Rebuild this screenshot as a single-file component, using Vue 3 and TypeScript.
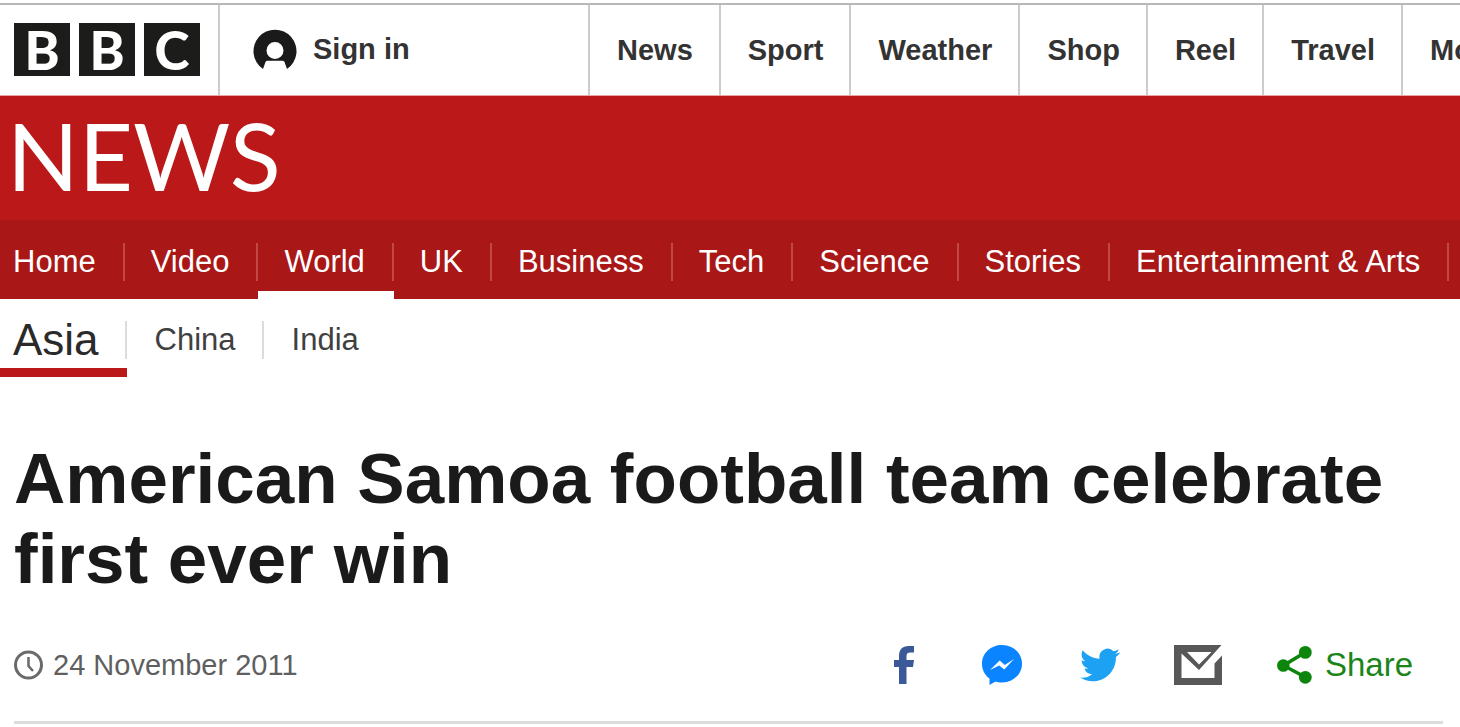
<script setup lang="ts">
interface NavItem {
  label: string
  current?: boolean
}

const logoLetters: string[] = ['B', 'B', 'C']
const siteLinks: string[] = ['News', 'Sport', 'Weather', 'Shop', 'Reel', 'Travel', 'More']
const sections: NavItem[] = [
  { label: 'Home' },
  { label: 'Video' },
  { label: 'World', current: true },
  { label: 'UK' },
  { label: 'Business' },
  { label: 'Tech' },
  { label: 'Science' },
  { label: 'Stories' },
  { label: 'Entertainment & Arts' },
]
const regions: NavItem[] = [{ label: 'Asia', current: true }, { label: 'China' }, { label: 'India' }]
</script>

<template>
  <div class="page">
    <header>
      <div class="top-bar">
        <a class="logo" href="#" aria-label="BBC">
          <span v-for="(letter, i) in logoLetters" :key="i" class="logo-block">{{ letter }}</span>
        </a>
        <a class="account" href="#">
          <svg width="44" height="40" viewBox="0 0 44 40" aria-hidden="true">
            <path
              fill="#1a1a1a"
              fill-rule="evenodd"
              d="M10 40A21.5 21.5 0 1 1 34 40L31.500 33Q31 31.800 29.500 31.800H14.500Q13 31.800 12.500 33ZM22 13a8.500 8.500 0 1 0 0 17a8.500 8.500 0 1 0 0-17Z"
            />
          </svg>
          <span>Sign in</span>
        </a>
        <nav class="site-nav" aria-label="BBC">
          <a v-for="link in siteLinks" :key="link" href="#">{{ link }}</a>
        </nav>
      </div>
      <div class="masthead">
        <a class="brand" href="#">NEWS</a>
      </div>
      <nav class="sections" aria-label="News sections">
        <a v-for="s in sections" :key="s.label" href="#" :class="{ current: s.current }">
          <span>{{ s.label }}</span>
        </a>
      </nav>
      <nav class="regions" aria-label="World regions">
        <a v-for="r in regions" :key="r.label" href="#" :class="{ current: r.current }">
          <span>{{ r.label }}</span>
        </a>
      </nav>
    </header>

    <main class="story">
      <h1>American Samoa football team celebrate first ever win</h1>
      <div class="meta">
        <div class="date">
          <svg width="29" height="30" viewBox="0 0 29 30" fill="none" stroke="#6a6a6a" aria-hidden="true">
            <circle cx="14.500" cy="15" r="13" stroke-width="3" />
            <path d="M14.500 7V16L19 21" stroke-width="2.500" />
          </svg>
          <time datetime="2011-11-24">24 November 2011</time>
        </div>
        <div class="share">
          <button type="button" class="icon-button" aria-label="Share on Facebook">
            <svg width="20" height="38" viewBox="0 0 20 38">
              <path
                fill="#3b5998"
                d="M5 38V21H0V14H5V10C5 3.500 8.500 0 14.500 0H20V6.500H16.500C13.500 6.500 12.500 7.500 12.500 10V14H20L19 21H12.500V38Z"
              />
            </svg>
          </button>
          <button type="button" class="icon-button" aria-label="Share on Messenger">
            <svg width="40" height="40" viewBox="0 0 40 40">
              <path
                fill="#0a84ff"
                d="M20 0C31 0 40 8 40 18.700S31 37.500 20 37.500C17.500 37.500 15.500 37.200 13.500 36.500L7.500 40V33.500C2.500 30 0 24.500 0 18.700C0 8 9 0 20 0Z"
              />
              <path fill="#fff" d="M8 25L17.700 15.500L22.800 20L32 14L22.300 24.500L17.200 20.500Z" />
            </svg>
          </button>
          <button type="button" class="icon-button" aria-label="Share on Twitter">
            <svg width="40" height="34" viewBox="0 2 24 20">
              <path
                fill="#1da1f2"
                d="M23.950 4.570a10 10 0 0 1-2.820.77 4.960 4.960 0 0 0 2.160-2.720c-.95.550-2 .95-3.120 1.180a4.920 4.920 0 0 0-8.380 4.480C7.690 8.090 4.070 6.130 1.640 3.160a4.820 4.820 0 0 0-.67 2.480c0 1.710.87 3.210 2.190 4.100a4.900 4.900 0 0 1-2.230-.62v.06a4.920 4.920 0 0 0 3.950 4.830 5 5 0 0 1-2.210.08 4.940 4.940 0 0 0 4.600 3.420A9.870 9.870 0 0 1 0 19.540a14 14 0 0 0 7.560 2.210c9.050 0 14-7.500 14-13.980 0-.21 0-.42-.02-.63a9.940 9.940 0 0 0 2.460-2.550Z"
              />
            </svg>
          </button>
          <button type="button" class="icon-button" aria-label="Share by email">
            <svg width="48" height="40" viewBox="0 0 48 40">
              <path
                fill="#585858"
                fill-rule="evenodd"
                d="M0 0H47.500L25 25L7.500 8.500V33H40.500V18.500L48 10.500V40H0ZM13 7H37.500L25 19.500Z"
              />
            </svg>
          </button>
          <button type="button" class="share-button">
            <svg width="35" height="38" viewBox="0 0 35 38" aria-hidden="true">
              <path d="M28 6.500L6.500 19.500L28 31" fill="none" stroke="#0c850c" stroke-width="3.500" />
              <g fill="#0c850c">
                <circle cx="6.300" cy="19.500" r="6.300" />
                <circle cx="28.300" cy="6.400" r="6.400" />
                <circle cx="28.300" cy="31.300" r="6.400" />
              </g>
            </svg>
            <span>Share</span>
          </button>
        </div>
      </div>
    </main>
  </div>
</template>

<style>
body {
  margin: 0;
  background: #fff;
}
</style>

<style scoped>
.page {
  overflow: hidden;
  font-family: "Liberation Sans", Arial, sans-serif;
  color: #1a1a1a;
}

a {
  color: inherit;
  text-decoration: none;
}

svg {
  display: block;
  flex: none;
}

.top-bar {
  display: flex;
  height: 90px;
  margin-top: 3px;
  border-top: 2px solid #b8b8b8;
  border-bottom: 1px solid #e9a3a3;
  font-size: 29px;
  font-weight: 700;
  color: #333;
}

.logo {
  display: flex;
  align-items: center;
  gap: 9px;
  padding: 0 18px 2px 14px;
}

.logo-block {
  width: 56px;
  height: 53px;
  background: #1c1c1a;
  color: #fff;
  font: 900 53px/53px Lato, "Liberation Sans", sans-serif;
  text-align: center;
}

.account {
  display: flex;
  align-items: center;
  gap: 16px;
  box-sizing: border-box;
  flex: 0 0 370px;
  padding: 0 0 2px 33px;
  border-left: 2px solid #ccc;
}

.site-nav {
  display: flex;
}

.site-nav a {
  padding: 0 26px 0 27px;
  border-left: 2px solid #ccc;
  line-height: 90px;
}

.masthead {
  height: 124px;
  background: #bb1919;
}

.brand {
  display: inline-block;
  padding-left: 7px;
  color: #fff;
  font: 400 94px/118px Lato, "Liberation Sans", sans-serif;
}

.sections,
.regions {
  display: flex;
  font-size: 31px;
  white-space: nowrap;
}

.sections {
  background: #a91717;
  color: #fff;
}

.sections a {
  height: 48px;
  padding-top: 23px;
  border-bottom: 8px solid transparent;
}

.sections span {
  display: block;
  padding: 0 27px 0 26px;
  border-right: 2px solid #c24747;
  line-height: 38px;
}

.sections a:first-child span {
  padding-left: 13px;
}

.sections .current {
  border-bottom-color: #fff;
}

.regions {
  color: #404040;
}

.regions a {
  height: 47px;
  padding-top: 22px;
  border-bottom: 9px solid transparent;
}

.regions span {
  display: block;
  padding: 0 26px 0 28px;
  border-right: 2px solid #dcdcdc;
  line-height: 38px;
}

.regions a:last-child span {
  border-right: 0;
}

.regions .current {
  border-bottom-color: #bb1919;
  color: #2a2a2a;
  font-size: 44px;
}

.regions .current span {
  padding-left: 13px;
}

.story {
  margin: 62px 17px 0 14px;
  border-bottom: 3px solid #dcdcdc;
}

h1 {
  margin: 0;
  font-size: 71px;
  line-height: 80px;
}

.meta {
  display: flex;
  align-items: center;
  justify-content: space-between;
  padding: 46px 0 36px;
}

.date {
  display: flex;
  align-items: center;
  gap: 10px;
  color: #5f5f5f;
  font-size: 29px;
}

.share {
  display: flex;
  align-items: center;
  padding-right: 30px;
}

button {
  padding: 0;
  border: 0;
  background: none;
  font: inherit;
  cursor: pointer;
}

.icon-button {
  display: flex;
  justify-content: center;
  width: 98px;
}

.share-button {
  display: flex;
  align-items: center;
  gap: 13px;
  margin-left: 30px;
  color: #1b841b;
  font-size: 33px;
}
</style>
